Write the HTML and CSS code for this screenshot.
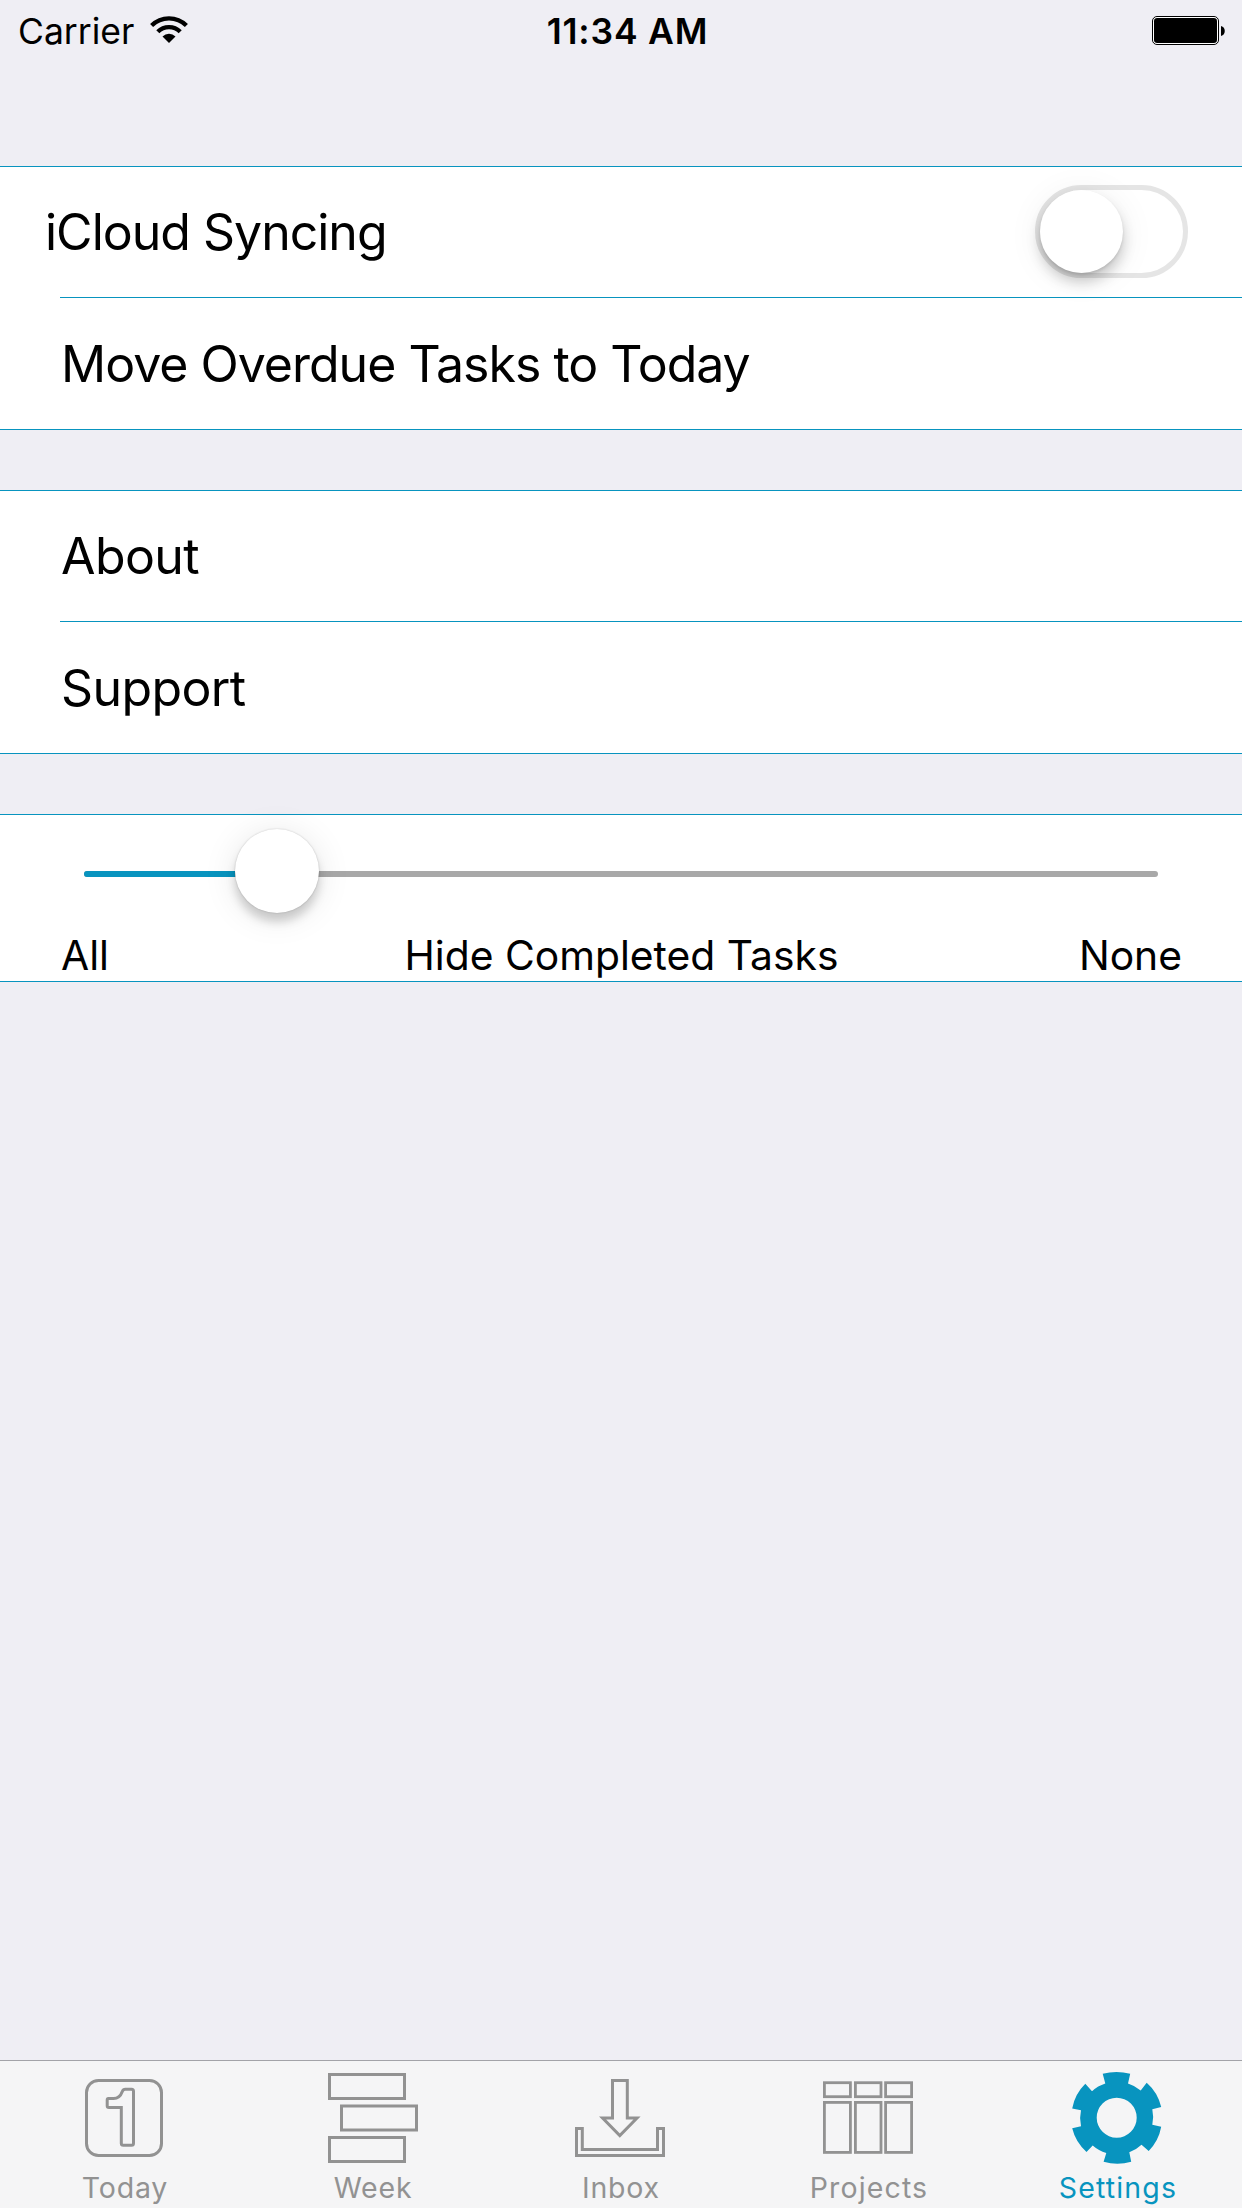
FILE: index.html
```html
<!DOCTYPE html>
<html lang="en">
<head>
<meta charset="utf-8">
<title>Settings</title>
<link rel="stylesheet" href="styles.css">
</head>
<body>
<div class="screen">
  <header class="status">
    <div class="status-left">
      <span class="carrier">Carrier</span>
      <svg class="wifi" width="38" height="28" viewBox="0 0 38 28">
        <path d="M1.6 9.6A24.6 24.6 0 0 1 36.4 9.6" fill="none" stroke="#000" stroke-width="4.3"/>
        <path d="M7.8 15.8A15.8 15.8 0 0 1 30.2 15.8" fill="none" stroke="#000" stroke-width="4.3"/>
        <path d="M19 27L12.5 20.5A9.3 9.3 0 0 1 25.5 20.5Z"/>
      </svg>
    </div>
    <span class="time">11:34 AM</span>
    <div class="status-right">
      <svg class="battery" width="74" height="30" viewBox="0 0 74 30">
        <rect x=".5" y=".5" width="66" height="28" rx="4.5" fill="#fff" stroke="#000"/>
        <rect x="2" y="2" width="63" height="25" rx="3.2"/>
        <path d="M69 10C74 11 74 19 69 20Z"/>
      </svg>
    </div>
  </header>

  <main class="content">
    <section class="group">
      <div class="row row-first row-switch">
        <span class="label label-wide">iCloud Syncing</span>
        <span class="switch"><span class="switch-knob"></span></span>
      </div>
      <div class="divider"></div>
      <div class="row"><span class="label label-wide">Move Overdue Tasks to Today</span></div>
    </section>

    <section class="group">
      <div class="row row-first"><span class="label">About</span></div>
      <div class="divider"></div>
      <div class="row"><span class="label">Support</span></div>
    </section>

    <section class="group group-slider">
      <div class="slider">
        <span class="slider-fill"></span>
        <span class="slider-knob"></span>
      </div>
      <div class="slider-labels">
        <span>All</span><span>Hide Completed Tasks</span><span class="slider-end">None</span>
      </div>
    </section>
  </main>

  <nav class="tabs">
    <a class="tab">
      <svg class="icon" viewBox="0 0 100 112">
        <rect x="12.5" y="19.5" width="75" height="75" rx="12"/>
        <path d="M34.3 37.5H39.5C43.5 37.5 46.7 35 48.3 30.5Q49.2 28.2 51.3 28.2H57.5Q59.5 28.2 59.5 30.2V82.3Q59.5 84.3 57.5 84.3H49.3Q47.3 84.3 47.3 82.3V46.5H35Q33.2 46.5 33.2 44.7V39Q33.2 37.5 34.3 37.5Z"/>
      </svg>
      <span class="tab-label">Today</span>
    </a>
    <a class="tab">
      <svg class="icon" viewBox="0 0 100 112">
        <rect x="7.5" y="13.5" width="75" height="24"/>
        <rect x="19.5" y="45" width="75" height="24"/>
        <rect x="7.5" y="76.5" width="75" height="24"/>
      </svg>
      <span class="tab-label">Week</span>
    </a>
    <a class="tab">
      <svg class="icon" viewBox="0 0 100 112">
        <path d="M42.5 19.5H57.3V57H67L49.8 74.5L32.6 57H42.5Z"/>
        <path d="M6.5 67.5H12.3V88.5H87.5V67.5H93.5V94.5H6.5Z"/>
      </svg>
      <span class="tab-label">Inbox</span>
    </a>
    <a class="tab">
      <svg class="icon icon-fine" viewBox="0 0 100 112">
        <rect x="6.4" y="21.7" width="26" height="14"/>
        <rect x="37.4" y="21.7" width="25.6" height="14"/>
        <rect x="67.6" y="21.7" width="26" height="14"/>
        <rect x="6.4" y="41.4" width="26" height="50"/>
        <rect x="37.4" y="41.4" width="25.6" height="50"/>
        <rect x="67.6" y="41.4" width="26" height="50"/>
      </svg>
      <span class="tab-label tab-label-long">Projects</span>
    </a>
    <a class="tab tab-active">
      <svg class="icon icon-solid" viewBox="0 0 100 112">
        <path fill-rule="evenodd" d="M35.7 12.8Q49.5 9.2 63.2 12.8L61 22.5A36 36 0 0 1 73.7 29.5L79.7 21.7A46 46 0 0 1 94.2 46L85.3 48.3A36 36 0 0 1 85.3 63.7L94.2 65.7A46 46 0 0 1 81.7 89.9L74.5 83.7A36 36 0 0 1 62.3 91.3L64.2 100.8Q50.4 104.6 36.6 100.8L39.3 92A36 36 0 0 1 25.7 84.5L19.5 90.9A46 46 0 0 1 5.2 67.3L14 65.3A36 36 0 0 1 14 49.3L5.2 47.5A46 46 0 0 1 18.3 22.8L25 30.2A36 36 0 0 1 38.3 22.5ZM69.7 56.7A20 20 0 1 0 29.7 56.7A20 20 0 1 0 69.7 56.7Z"/>
      </svg>
      <span class="tab-label tab-label-long">Settings</span>
    </a>
  </nav>
</div>
</body>
</html>
```
FILE: styles.css
```css
* { box-sizing: border-box; }

body {
  margin: 0;
  background: #efeef4;
  color: #000;
  font-family: Inter, "Liberation Sans", sans-serif;
}

.screen {
  display: flex;
  flex-direction: column;
  width: 1242px;
  height: 2208px;
  overflow: hidden;
}

/* Status bar */
.status {
  display: grid;
  grid-template-columns: 1fr auto 1fr;
  height: 62px;
  padding: 0 16px 0 18px;
  line-height: 64px;
  white-space: nowrap;
}
.status-left { display: flex; gap: 15px; }
.carrier { width: 117px; font-size: 35.5px; }
.wifi { margin-top: 16px; }
.time { padding-left: 11px; font-size: 35.5px; font-weight: 600; letter-spacing: .8px; }
.status-right { display: flex; justify-content: flex-end; }
.battery { margin-top: 16px; }

/* Grouped rows */
.content {
  display: flex;
  flex-direction: column;
  gap: 60px;
  flex: 1;
  padding-top: 104px;
}
.group {
  height: 264px;
  border-top: 1px solid #0894bf;
  border-bottom: 1px solid #0894bf;
  background: #fff;
}
.row {
  display: flex;
  align-items: center;
  justify-content: space-between;
  height: 131px;
  padding: 0 54px 0 61px;
}
.row-first { height: 130px; }
.row-switch { padding-left: 45px; }
.divider { height: 1px; margin-left: 60px; background: #0894bf; }
.label { font-size: 50px; line-height: 60px; letter-spacing: -.6px; white-space: nowrap; }
.label-wide { letter-spacing: -1px; }

.switch {
  display: flex;
  width: 153px;
  height: 93px;
  margin-bottom: 1px;
  border: 5px solid #e5e5e5;
  border-radius: 47px;
}
.switch-knob {
  width: 83px;
  height: 83px;
  border-radius: 50%;
  background: #fff;
  box-shadow: 0 9px 14px rgba(0, 0, 0, .2), 0 2px 3px rgba(0, 0, 0, .1), 0 4px 36px rgba(0, 0, 0, .07);
}

/* Slider */
.group-slider { height: 168px; padding: 13px 60px 0 61px; }
.slider {
  position: relative;
  display: flex;
  align-items: center;
  width: 1074px;
  height: 84px;
  margin-left: 23px;
}
.slider::before {
  content: "";
  position: absolute;
  inset: 43px 0 35px;
  border-radius: 3px;
  background: #a8a8a8;
}
.slider-fill {
  position: relative;
  width: 151px;
  height: 6px;
  margin-top: 8px;
  border-radius: 3px 0 0 3px;
  background: #0894bf;
}
.slider-knob {
  position: relative;
  width: 84px;
  height: 84px;
  margin-top: 1px;
  flex: none;
  border-radius: 50%;
  background: #fff;
  box-shadow: 0 9px 10px rgba(0, 0, 0, .17), 0 0 2px rgba(0, 0, 0, .2), 0 4px 34px rgba(0, 0, 0, .1);
}
.slider-labels {
  display: grid;
  grid-template-columns: 1fr auto 1fr;
  margin-top: 18px;
  font-size: 40.8px;
  line-height: 50px;
}
.slider-end { text-align: right; }

/* Tab bar */
.tabs {
  display: grid;
  grid-template-columns: repeat(4, 248px) 250px;
  height: 148px;
  border-top: 1px solid #a3a3a8;
  background: #f5f5f6;
  color: #929292;
}
.tab { display: flex; flex-direction: column; align-items: center; }
.tab-active { color: #0894bf; }
.icon {
  width: 100px;
  height: 112px;
  fill: none;
  stroke: currentColor;
  stroke-width: 3;
}
.icon-fine { stroke-width: 2.8; }
.icon-solid { fill: currentColor; stroke: none; }
.tab-label { padding-left: 2px; font-size: 28.5px; line-height: 30px; letter-spacing: .8px; }
.tab-label-long { letter-spacing: 1.15px; }
```
